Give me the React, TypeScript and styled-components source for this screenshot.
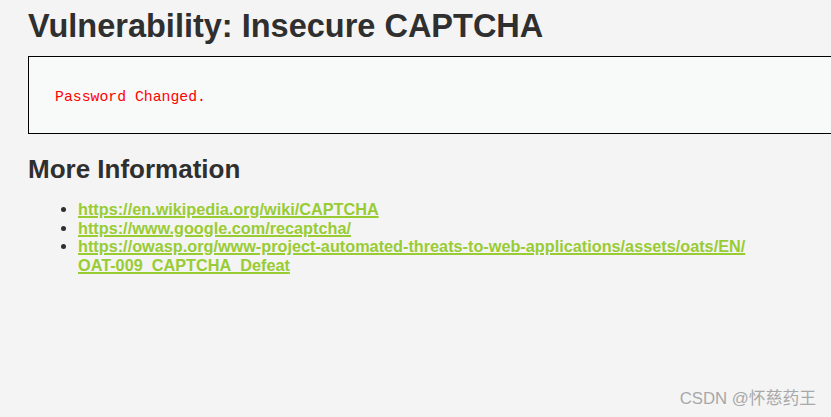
import React from "react";
import styled, { createGlobalStyle } from "styled-components";

const Global = createGlobalStyle`
  html, body {
    margin: 0;
    padding: 0;
    background: #f4f4f4;
    overflow: hidden;
  }
  body {
    font-family: "Liberation Sans", Arial, sans-serif;
    color: #2f2f2f;
  }
`;

const Page = styled.div`
  position: relative;
  width: 831px;
  height: 417px;
  padding: 8px 0 0 28px;
  box-sizing: border-box;
  overflow: hidden;
`;

const Title = styled.h1`
  margin: 0;
  font-size: 32.5px;
  font-weight: bold;
  line-height: 37px;
  color: #2f2f2f;
`;

const CodeArea = styled.div`
  margin-top: 11px;
  width: 820px;
  height: 78px;
  box-sizing: border-box;
  border: 1px solid #000;
  background: #f8f9f9;
  padding: 32px 0 0 26px;
`;

const Message = styled.pre`
  margin: 0;
  font-family: "Liberation Mono", "Courier New", monospace;
  font-size: 14.8px;
  line-height: 17px;
  color: #ff0000;
`;

const SubTitle = styled.h2`
  margin: 20px 0 0;
  font-size: 26px;
  font-weight: bold;
  line-height: normal;
  color: #2f2f2f;
`;

const LinkList = styled.ul`
  margin: 15px 0 0;
  padding-left: 50px;
  list-style: disc;
  font-size: 16.25px;
  line-height: 18.7px;
  color: #2f2f2f;
`;

const Item = styled.li`
  font-weight: bold;
`;

const Link = styled.a`
  color: #99cc33;
  font-weight: bold;
  text-decoration: underline;
  text-decoration-thickness: 2px;
  text-underline-offset: 1px;
`;

const Watermark = styled.div`
  position: absolute;
  right: 15px;
  bottom: 8px;
  font-family: "Liberation Sans", "Noto Sans CJK SC", sans-serif;
  font-size: 16.8px;
  color: #a8a8a8;
`;

const links = [
  { href: "https://en.wikipedia.org/wiki/CAPTCHA", text: "https://en.wikipedia.org/wiki/CAPTCHA" },
  { href: "https://www.google.com/recaptcha/", text: "https://www.google.com/recaptcha/" },
  {
    href: "https://owasp.org/www-project-automated-threats-to-web-applications/assets/oats/EN/OAT-009_CAPTCHA_Defeat",
    text: (
      <>
        https://owasp.org/www-project-automated-threats-to-web-applications/assets/oats/EN/
        <br />
        OAT-009_CAPTCHA_Defeat
      </>
    ),
  },
];

export default function App() {
  return (
    <>
      <Global />
      <Page>
        <Title>Vulnerability: Insecure CAPTCHA</Title>
        <CodeArea>
          <Message>Password Changed.</Message>
        </CodeArea>
        <SubTitle>More Information</SubTitle>
        <LinkList>
          {links.map((l) => (
            <Item key={l.href}>
              <Link href={l.href}>{l.text}</Link>
            </Item>
          ))}
        </LinkList>
        <Watermark>CSDN @怀慈药王</Watermark>
      </Page>
    </>
  );
}
